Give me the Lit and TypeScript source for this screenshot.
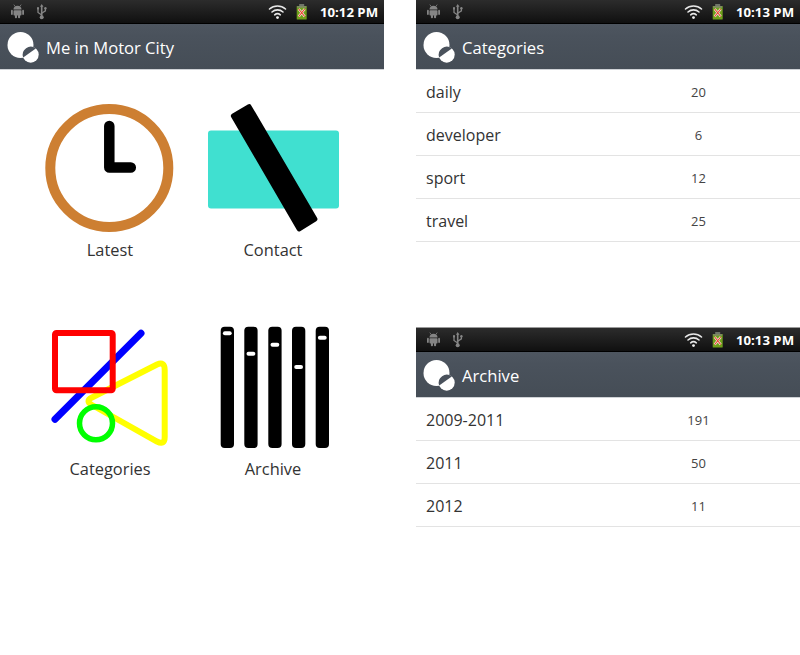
import { LitElement, css, html, svg } from "lit";
import { customElement, property } from "lit/decorators.js";

const font = css`"Open Sans", "Noto Sans", sans-serif`;

@customElement("app-bars")
export class AppBars extends LitElement {
  @property() heading = "";
  @property() time = "";

  render() {
    return html`
      <div class="status">
        <svg class="left" width="50" height="23" viewBox="0 0 50 23">
          <g fill="#858585">
            <path d="M13.500 9.600a4 3.900 0 0 1 8 0z" />
            <path d="M15 6.200l-1.200-1.600M20 6.200l1.200-1.600" stroke="#858585" stroke-width="0.800" />
            <rect x="13.500" y="10.300" width="8" height="5.200" rx="0.800" />
            <rect x="14.900" y="14.500" width="2.100" height="3.700" rx="1" />
            <rect x="18" y="14.500" width="2.100" height="3.700" rx="1" />
            <rect x="11" y="9.800" width="1.800" height="5.200" rx="0.900" />
            <rect x="22.200" y="9.800" width="1.800" height="5.200" rx="0.900" />
            <path d="M41.700 4l1.800 2.800h-1v10h-1.600v-10h-1z" />
            <circle cx="41.700" cy="17.300" r="2" />
            <rect x="37" y="7.200" width="2" height="2.200" />
            <circle cx="45.400" cy="8.200" r="1.200" />
          </g>
          <path
            d="M41.700 15l-3.700-2.500V9M41.700 13.200l3.700-2.400V9"
            fill="none"
            stroke="#858585"
            stroke-width="1.300"
          />
        </svg>
        <svg width="40" height="23" viewBox="0 0 40 23">
          <g fill="none" stroke="#e8e8e8" stroke-width="1.600" stroke-linecap="round">
            <path d="M1.500 9a12 12 0 0 1 16 0" />
            <path d="M4 12a8.200 8.200 0 0 1 11 0" />
            <path d="M6.700 14.800a4.200 4.200 0 0 1 5.600 0" />
          </g>
          <circle cx="9.500" cy="17.600" r="1.400" fill="#f0f0f0" />
          <g transform="translate(1.200 0)">
            <rect x="30" y="4" width="5" height="2" fill="#6f7568" />
            <rect x="27.500" y="6" width="10" height="13.500" rx="0.500" fill="#6f9f1a" />
            <rect x="28" y="6" width="9" height="1.800" fill="#7d8a62" />
            <path d="M29.500 9l6 7.500M35.500 9l-6 7.500" stroke="#f4e8e0" stroke-width="2.400" />
            <path d="M29.500 9l6 7.500M35.500 9l-6 7.500" stroke="#e8402a" stroke-width="1.100" />
          </g>
        </svg>
        <span class="time">${this.time}</span>
      </div>
      <div class="action">
        <svg width="46" height="46" viewBox="0 24 46 46">
          <circle cx="20.500" cy="45" r="13" fill="#fff" />
          <circle cx="30.700" cy="54.700" r="8" fill="#fff" />
          <path d="M23.200 57.500A8 8 0 0 1 35.800 48.600z" fill="#4a525c" />
        </svg>
        <span>${this.heading}</span>
      </div>
    `;
  }

  static styles = css`
    :host {
      display: block;
    }
    .status {
      height: 23px;
      display: flex;
      align-items: center;
      background: linear-gradient(#2c2c2c, #101010);
      border-bottom: 1px solid #000;
    }
    .left {
      margin-right: auto;
    }
    .time {
      font: bold 13.200px ${font};
      color: #fff;
      width: 58px;
      margin: 0 6px 0 12px;
      white-space: nowrap;
    }
    .action {
      height: 45px;
      display: flex;
      align-items: center;
      background: linear-gradient(#4e5660 0, #4a525c 12px, #454d56);
      border-bottom: 1px solid #cfd2d6;
      color: #fff;
      font: 16.600px ${font};
    }
    .action svg {
      flex: none;
    }
    .action span {
      padding-top: 1px;
    }
  `;
}

@customElement("home-screen")
export class HomeScreen extends LitElement {
  // bar x and the y of its little white marker
  bars = [
    [220.7, 333.3],
    [244.3, 353.7],
    [268.3, 344.7],
    [292, 367],
    [315.7, 337.7],
  ];

  render() {
    return html`
      <app-bars heading="Me in Motor City" time="10:12 PM"></app-bars>
      <div class="grid">
        <div class="cell">
          <svg width="150" height="140" viewBox="35 98 150 140">
            <circle cx="109.300" cy="168" r="59" fill="none" stroke="#cd7f32" stroke-width="10" />
            <path
              d="M109.300 126v41.500h21.500"
              fill="none"
              stroke="#000"
              stroke-width="10.500"
              stroke-linecap="round"
              stroke-linejoin="round"
            />
          </svg>
          <span>Latest</span>
        </div>
        <div class="cell">
          <svg width="150" height="140" viewBox="198 98 150 140">
            <rect x="208" y="130.500" width="131" height="78" rx="3" fill="#40e0d0" />
            <path
              d="M233.400 115.900L249.100 106.700 314.900 219.100 299.200 228.900z"
              fill="#000"
              stroke="#000"
              stroke-width="5"
              stroke-linejoin="round"
            />
          </svg>
          <span>Contact</span>
        </div>
        <div class="cell">
          <svg width="150" height="140" viewBox="35 317 150 140">
            <path
              d="M164.700 370V437Q164.700 445.500 157 441.500L92 405Q85 401 92 397.500L157 364.500Q164.700 361 164.700 370z"
              fill="none"
              stroke="#ff0"
              stroke-width="6"
            />
            <path d="M55 419.300L141 333.300" stroke="#00f" stroke-width="7" stroke-linecap="round" />
            <rect
              x="55"
              y="333"
              width="57.700"
              height="57.300"
              rx="1.500"
              fill="none"
              stroke="#f00"
              stroke-width="6"
            />
            <circle cx="96" cy="423.300" r="16.500" fill="none" stroke="#0f0" stroke-width="5.500" />
          </svg>
          <span>Categories</span>
        </div>
        <div class="cell">
          <svg width="150" height="140" viewBox="198 317 150 140">
            ${this.bars.map(
              ([x, y]) => svg`
                <rect x=${x} y="326.700" width="13.300" height="121.300" rx="4" fill="#000" />
                <rect x=${x + 2.2} y=${y - 2} width="8.800" height="4" rx="2" fill="#fff" />
              `,
            )}
          </svg>
          <span>Archive</span>
        </div>
      </div>
    `;
  }

  static styles = css`
    :host {
      display: block;
      height: 655px;
      background: #fff;
    }
    .grid {
      display: grid;
      grid-template-columns: 163px 163px;
      row-gap: 56px;
      padding: 28px 0 0 28.500px;
    }
    .cell {
      height: 163px;
      display: flex;
      flex-direction: column;
      align-items: center;
      font: 16.400px/22px ${font};
      color: #333;
    }
    .cell svg {
      display: block;
      margin-bottom: 1px;
    }
  `;
}

@customElement("list-screen")
export class ListScreen extends LitElement {
  @property() heading = "";
  @property() time = "";
  @property({ type: Array }) rows: [string, number][] = [];

  render() {
    return html`
      <app-bars heading=${this.heading} time=${this.time}></app-bars>
      ${this.rows.map(
        ([name, count]) => html`
          <div class="row">
            <span class="name">${name}</span>
            <span class="count">${count}</span>
          </div>
        `,
      )}
    `;
  }

  static styles = css`
    :host {
      display: block;
      background: #fff;
    }
    .row {
      height: 41px;
      display: grid;
      grid-template-columns: 232px 80px;
      align-items: center;
      padding: 1px 0 0 10px;
      border-bottom: 1px solid #e3e3e3;
    }
    .name {
      font: 16px ${font};
      color: #333;
    }
    .count {
      font: 13px ${font};
      color: #444;
      text-align: center;
      padding-left: 1px;
    }
  `;
}

@customElement("app-root")
export class AppRoot extends LitElement {
  render() {
    return html`
      <home-screen></home-screen>
      <div class="side">
        <list-screen
          class="top"
          heading="Categories"
          time="10:13 PM"
          .rows=${[
            ["daily", 20],
            ["developer", 6],
            ["sport", 12],
            ["travel", 25],
          ]}
        ></list-screen>
        <list-screen
          class="bottom"
          heading="Archive"
          time="10:13 PM"
          .rows=${[
            ["2009-2011", 191],
            ["2011", 50],
            ["2012", 11],
          ]}
        ></list-screen>
      </div>
    `;
  }

  static styles = css`
    :host {
      display: grid;
      grid-template-columns: 384px 384px;
      column-gap: 32px;
      width: 800px;
      height: 655px;
      overflow: hidden;
      background: #fff;
    }
    .top {
      height: 327px;
    }
    .bottom {
      border-top: 1px solid #9a9a9a;
    }
  `;
}
